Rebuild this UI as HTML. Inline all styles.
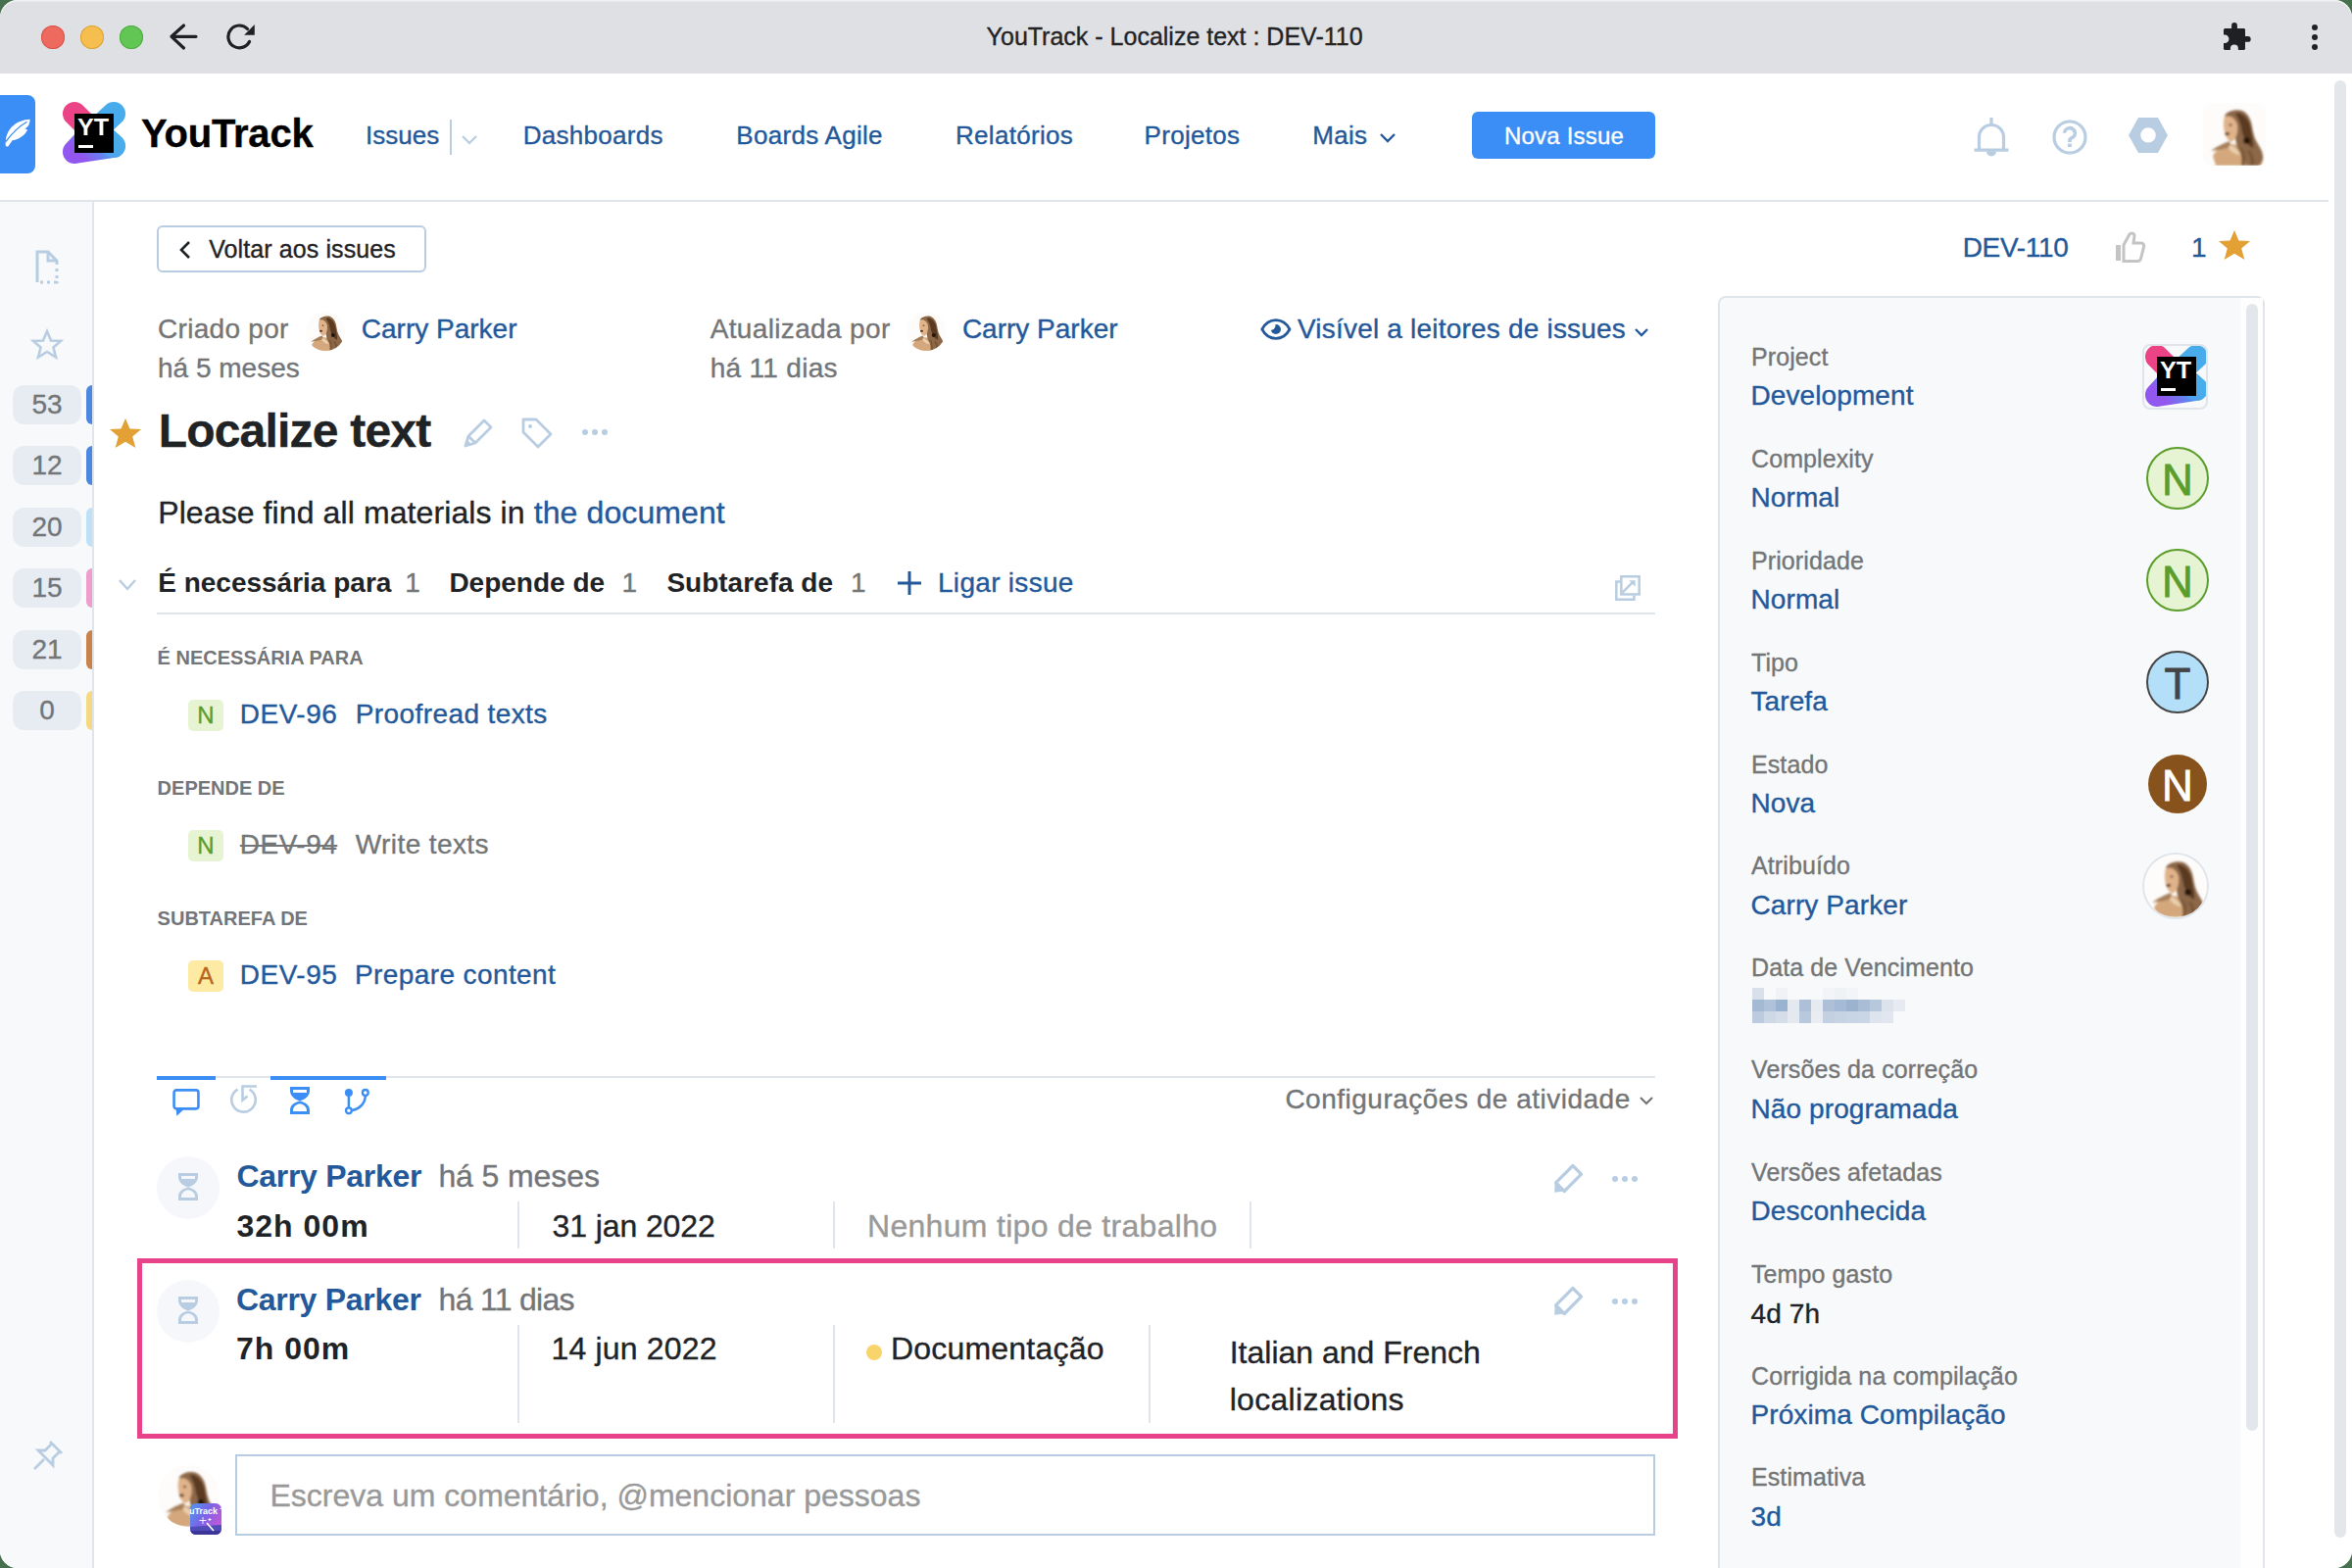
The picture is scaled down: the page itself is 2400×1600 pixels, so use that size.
<!DOCTYPE html>
<html><head><meta charset="utf-8"><title>YouTrack - Localize text : DEV-110</title>
<style>
html,body{margin:0;padding:0;background:#47714e;}
#win{position:relative;width:2400px;height:1600px;overflow:hidden;border-radius:18px;background:#fff;}
#win:after{content:"";position:absolute;left:0;top:0;right:0;bottom:0;border-radius:18px;box-shadow:inset 0 1.5px 0 rgba(255,255,255,0.55);pointer-events:none;}
.a{position:absolute;}
.t{position:absolute;white-space:nowrap;font-family:"Liberation Sans",sans-serif;-webkit-text-stroke:0.35px currentColor;}
svg.a{overflow:visible;}
s{text-decoration-thickness:2px;}
</style></head><body><div id="win">
<div class="a" style="left:0px;top:0px;width:2400px;height:75px;background:#dfe0e4;"></div>
<div class="a" style="left:42px;top:26px;width:24px;height:24px;background:#ee6a5f;border-radius:50%;box-shadow:inset 0 0 0 1px #d65447;"></div>
<div class="a" style="left:82px;top:26px;width:24px;height:24px;background:#f5be4f;border-radius:50%;box-shadow:inset 0 0 0 1px #d9a237;"></div>
<div class="a" style="left:122px;top:26px;width:24px;height:24px;background:#62c655;border-radius:50%;box-shadow:inset 0 0 0 1px #4eab42;"></div>
<svg class="a" style="left:170px;top:20px" width="36" height="36" viewBox="0 0 36 36"><path d="M17.5 6 L5 17.3 L17.5 29 M5 17.3 H30" fill="none" stroke="#1f2023" stroke-width="3.2" stroke-linecap="round" stroke-linejoin="round"/></svg>
<svg class="a" style="left:228px;top:20px" width="36" height="36" viewBox="0 0 36 36"><path d="M26.5 22.5 A11.4 11.4 0 1 1 24.5 9.5" fill="none" stroke="#1f2023" stroke-width="3.2" stroke-linecap="round"/><path d="M31.8 5.1 V15.8 H21.1 Z" fill="#1f2023"/></svg>
<div class="t" style="left:1006.6px;top:22.96px;font-size:25px;line-height:28.75px;color:#222326;">YouTrack - Localize text : DEV-110</div>
<svg class="a" style="left:2266px;top:20px" width="34" height="34" viewBox="0 0 34 34"><path d="M3 10.5 a1.5 1.5 0 0 1 1.5-1.5 H11.1 V6 a2.9 2.9 0 0 1 5.8 0 V9 H23.5 a1.5 1.5 0 0 1 1.5 1.5 V17 H27.8 a2.9 2.9 0 0 1 0 5.8 H25 V29.5 a1.5 1.5 0 0 1 -1.5 1.5 H17.9 V29.4 a4 4 0 0 0 -8 0 V31 H4.5 a1.5 1.5 0 0 1 -1.5-1.5 V24 H4.2 a4.25 4.25 0 0 0 0-8.5 H3 Z" fill="#1f2023"/></svg>
<div class="a" style="left:2359px;top:25px;width:6px;height:6px;background:#1f2023;border-radius:50%;"></div>
<div class="a" style="left:2359px;top:35px;width:6px;height:6px;background:#1f2023;border-radius:50%;"></div>
<div class="a" style="left:2359px;top:45px;width:6px;height:6px;background:#1f2023;border-radius:50%;"></div>
<div class="a" style="left:0px;top:75px;width:2400px;height:1525px;background:#fff;"></div>
<div class="a" style="left:0px;top:204px;width:2376px;height:2px;background:#dfe5eb;"></div>
<div class="a" style="left:0px;top:97px;width:36px;height:80px;background:#3b8ef5;border-radius:0 8px 8px 0;"></div>
<svg class="a" style="left:0px;top:95px" width="40" height="85" viewBox="0 0 40 85"><path d="M30.6 26.8 C17 27.5 7 36 6 48.2 L5.6 52.5 C5.6 54.5 7.6 55.4 8.8 53.8 L12.6 48.2 C20.5 47.5 26.5 41.5 28 37.2 L25.2 36.3 C28.3 35 30.2 33 30.6 26.8 Z" fill="#fff"/><path d="M27.5 29.3 C19.5 34 11.5 42 6 49.5" fill="none" stroke="#3b8ef5" stroke-width="1.3"/></svg>
<svg class="a" style="left:58px;top:98px" width="76" height="76" viewBox="0 0 76 76"><defs>
<linearGradient id="lgA" x1="0" y1="0.8" x2="1" y2="0.4"><stop offset="0" stop-color="#9157ee"/><stop offset="0.5" stop-color="#5f86f0"/><stop offset="1" stop-color="#48adec"/></linearGradient>
</defs>
<path d="M18 57 L58 51 M18 57 L30 44 M58 51 L47 41" stroke="url(#lgA)" stroke-width="24" stroke-linecap="round" fill="none"/>
<path d="M18 18 L32 32" stroke="#ec4387" stroke-width="24" stroke-linecap="round"/>
<path d="M58 18 L44 31" stroke="#48acec" stroke-width="24" stroke-linecap="round"/>
<path d="M58 51 L47 41" stroke="#4aaeec" stroke-width="24" stroke-linecap="round" opacity="0.6"/>
<rect x="18" y="18" width="40" height="40" fill="#000"/>
<text x="21" y="40" font-family="Liberation Sans" font-weight="700" font-size="23.5" fill="#fff" textLength="32" lengthAdjust="spacingAndGlyphs">YT</text>
<rect x="22" y="50" width="15" height="3" fill="#fff"/></svg>
<div class="t" style="left:144px;top:112.74px;font-size:40px;line-height:46.0px;color:#000;font-weight:700;letter-spacing:-0.2px;">YouTrack</div>
<div class="t" style="left:373px;top:123.94px;font-size:26px;line-height:29.9px;color:#23599a;">Issues</div>
<div class="a" style="left:459px;top:122px;width:2px;height:36px;background:#b8cde2;"></div>
<svg class="a" style="left:470px;top:135.5px" width="18" height="14" viewBox="0 0 18 14"><path d="M2 3 L9 10 L16 3" fill="none" stroke="#b8cde2" stroke-width="2.2"/></svg>
<div class="t" style="left:533.7px;top:123.94px;font-size:26px;line-height:29.9px;color:#23599a;letter-spacing:0.3px;">Dashboards</div>
<div class="t" style="left:751.3px;top:123.94px;font-size:26px;line-height:29.9px;color:#23599a;letter-spacing:0.3px;">Boards Agile</div>
<div class="t" style="left:975px;top:123.94px;font-size:26px;line-height:29.9px;color:#23599a;letter-spacing:0.3px;">Relatórios</div>
<div class="t" style="left:1167.6px;top:123.94px;font-size:26px;line-height:29.9px;color:#23599a;letter-spacing:0.3px;">Projetos</div>
<div class="t" style="left:1339.3px;top:123.94px;font-size:26px;line-height:29.9px;color:#23599a;letter-spacing:0.3px;">Mais</div>
<svg class="a" style="left:1406px;top:133px" width="20" height="16" viewBox="0 0 20 16"><path d="M3 4 L10 11 L17 4" fill="none" stroke="#23599a" stroke-width="2.4"/></svg>
<div class="a" style="left:1502px;top:114px;width:187px;height:48px;background:#3b8ef5;border-radius:6px;"></div>
<div class="t" style="left:1535px;top:124.88px;font-size:24px;line-height:27.6px;color:#fff;letter-spacing:0.2px;">Nova Issue</div>
<svg class="a" style="left:2012px;top:118px" width="40" height="44" viewBox="0 0 40 44"><path d="M20 2 V10 M7.5 34 V22 a12.5 12.5 0 0 1 25 0 V34 M2.5 35.2 H37.5" fill="none" stroke="#b8cde2" stroke-width="3.2"/><path d="M15 36.5 a5 5 0 0 0 10 0 Z" fill="#b8cde2"/></svg>
<svg class="a" style="left:2093px;top:121px" width="38" height="38" viewBox="0 0 38 38"><circle cx="19" cy="19" r="16" fill="none" stroke="#b8cde2" stroke-width="3.2"/><path d="M13.6 14.8 a5.4 5.2 0 1 1 7.6 4.8 c-1.3 .6-2.3 1.3-2.3 2.8 V24" fill="none" stroke="#b8cde2" stroke-width="3.6"/><rect x="16.9" y="25.6" width="4" height="3.4" fill="#b8cde2"/></svg>
<svg class="a" style="left:2171px;top:119px" width="42" height="38" viewBox="0 0 42 38"><path d="M11 1 H31 L41 19 L31 37 H11 L1 19 Z M21 11.2 a7.7 7.7 0 1 0 0.01 0 Z" fill="#b8cde2" fill-rule="evenodd"/></svg>
<svg class="a" style="left:2248px;top:105px;border-radius:10px;" width="64" height="64" viewBox="0 0 64 64"><defs><clipPath id="c2248105"><rect width="64" height="64" rx="8"/></clipPath>
<filter id="f2248105" x="-10%" y="-10%" width="120%" height="120%"><feGaussianBlur stdDeviation="0.9"/></filter></defs>
<g clip-path="url(#c2248105)"><rect width="64" height="64" fill="#fdfcfb"/><g filter="url(#f2248105)">
<path d="M10 54 C14 46 22 43 30 42 L44 44 C52 46 58 51 61 57 L60 64 L13 64 Z" fill="#d4a87c"/>
<path d="M22 13 C25 8 34 6 40 8 C46 11 49 17 50 24 C51 30 52 36 56 42 C59 47 62 52 61 58 L57 64 L44 64 C44 56 40 50 35 46 C33 36 31 24 22 13 Z" fill="#8c6848"/>
<path d="M36 10 C44 12 48 20 49 28 C50 35 52 40 51 46 C46 44 42 38 40 30 C39 24 38 18 33 11 Z" fill="#5a3a22"/>
<circle cx="44.5" cy="38.5" r="3.2" fill="#24160c"/>
<path d="M27 39 C21 41 15 44 8 49 C15 48 22 47 29 45 Z" fill="#a67f5a"/>
<path d="M22 14 C27 12 33 15 35 22 C36 30 34 36 30 39.5 C27 39.5 24 37 23 33 C21 28 20 20 22 14 Z" fill="#e0b38a"/>
<ellipse cx="24.8" cy="31.5" rx="2.4" ry="1.5" fill="#4a2c18"/>
<ellipse cx="28" cy="22.5" rx="1.5" ry="1.1" fill="#4e3020"/>
<path d="M27 43 C31 44 36 48 38 53 C33 53 29 50 26 46 Z" fill="#ead0b0"/>
<path d="M40 46 C43 50 44 56 43 64 L39 64 C40 57 39 51 36 47 Z" fill="#7e5a3a"/>
<path d="M48 48 C51 53 53 58 52 64 L49 64 C49 58 48 53 45 49 Z" fill="#7a5535"/>
</g></g></svg>
<div class="a" style="left:2382px;top:82px;width:12px;height:1487px;background:#e3e6ea;border-radius:6px;"></div>
<div class="a" style="left:0px;top:206px;width:94px;height:1394px;background:#f7f9fa;"></div>
<div class="a" style="left:94px;top:206px;width:2px;height:1394px;background:#dfe5eb;"></div>
<svg class="a" style="left:36px;top:255px" width="24" height="34" viewBox="0 0 24 34"><path d="M2 33 V2 H13 L22 11 V15 M13 2 V11 H22 M22 19 V22 M22 26 V29 M22 32 V33 H19 M15 33 H12 M8 33 H5" fill="none" stroke="#b8cde2" stroke-width="3"/></svg>
<svg class="a" style="left:31px;top:335px" width="34" height="32" viewBox="0 0 34 32"><path d="M17 3 L21 12.5 L31 13 L23.5 19.5 L26 29.5 L17 24 L8 29.5 L10.5 19.5 L3 13 L13 12.5 Z" fill="none" stroke="#b8cde2" stroke-width="2.6" stroke-linejoin="miter"/></svg>
<div class="a" style="left:13px;top:393.0px;width:70px;height:40px;background:#e6ecf2;border-radius:12px;"></div>
<div class="t" style="left:13px;top:393.0px;width:70px;height:40px;line-height:40px;text-align:center;font-size:28px;color:#737577;">53</div>
<div class="a" style="left:88px;top:393.0px;width:6px;height:40px;background:#4d88e0;border-radius:6px 0 0 6px;"></div>
<div class="a" style="left:13px;top:455.4px;width:70px;height:40px;background:#e6ecf2;border-radius:12px;"></div>
<div class="t" style="left:13px;top:455.4px;width:70px;height:40px;line-height:40px;text-align:center;font-size:28px;color:#737577;">12</div>
<div class="a" style="left:88px;top:455.4px;width:6px;height:40px;background:#4d88e0;border-radius:6px 0 0 6px;"></div>
<div class="a" style="left:13px;top:517.8px;width:70px;height:40px;background:#e6ecf2;border-radius:12px;"></div>
<div class="t" style="left:13px;top:517.8px;width:70px;height:40px;line-height:40px;text-align:center;font-size:28px;color:#737577;">20</div>
<div class="a" style="left:88px;top:517.8px;width:6px;height:40px;background:#bfe1f8;border-radius:6px 0 0 6px;"></div>
<div class="a" style="left:13px;top:580.2px;width:70px;height:40px;background:#e6ecf2;border-radius:12px;"></div>
<div class="t" style="left:13px;top:580.2px;width:70px;height:40px;line-height:40px;text-align:center;font-size:28px;color:#737577;">15</div>
<div class="a" style="left:88px;top:580.2px;width:6px;height:40px;background:#ee9dcc;border-radius:6px 0 0 6px;"></div>
<div class="a" style="left:13px;top:642.6px;width:70px;height:40px;background:#e6ecf2;border-radius:12px;"></div>
<div class="t" style="left:13px;top:642.6px;width:70px;height:40px;line-height:40px;text-align:center;font-size:28px;color:#737577;">21</div>
<div class="a" style="left:88px;top:642.6px;width:6px;height:40px;background:#c9834a;border-radius:6px 0 0 6px;"></div>
<div class="a" style="left:13px;top:705.0px;width:70px;height:40px;background:#e6ecf2;border-radius:12px;"></div>
<div class="t" style="left:13px;top:705.0px;width:70px;height:40px;line-height:40px;text-align:center;font-size:28px;color:#737577;">0</div>
<div class="a" style="left:88px;top:705.0px;width:6px;height:40px;background:#f5d884;border-radius:6px 0 0 6px;"></div>
<div class="a" style="left:96px;top:206px;width:0px;height:0px;"></div>
<svg class="a" style="left:32px;top:1468px" width="34" height="34" viewBox="0 0 34 34"><path d="M19 3 L31 15 M21 5 L14 12 L7 12 L22 27 L22 20 L29 13 M13 21 L3 31" fill="none" stroke="#b8cde2" stroke-width="2.8"/></svg>
<div class="a" style="left:160px;top:230px;width:271px;height:44px;border:2px solid #b8cde2;border-radius:6px;"></div>
<svg class="a" style="left:180px;top:244px" width="18" height="22" viewBox="0 0 18 22"><path d="M13 3 L5 11 L13 19" fill="none" stroke="#1f2326" stroke-width="2.6"/></svg>
<div class="t" style="left:213.2px;top:239.86px;font-size:25px;line-height:28.75px;color:#1f2326;letter-spacing:0.1px;">Voltar aos issues</div>
<div class="t" style="left:161px;top:320.00px;font-size:28px;line-height:32.2px;color:#737577;letter-spacing:0.3px;">Criado por</div>
<svg class="a" style="left:312px;top:318px;border-radius:50%;" width="40" height="40" viewBox="0 0 64 64"><defs><clipPath id="c312318"><rect width="64" height="64" rx="32"/></clipPath>
<filter id="f312318" x="-10%" y="-10%" width="120%" height="120%"><feGaussianBlur stdDeviation="0.9"/></filter></defs>
<g clip-path="url(#c312318)"><rect width="64" height="64" fill="#fdfcfb"/><g filter="url(#f312318)">
<path d="M10 54 C14 46 22 43 30 42 L44 44 C52 46 58 51 61 57 L60 64 L13 64 Z" fill="#d4a87c"/>
<path d="M22 13 C25 8 34 6 40 8 C46 11 49 17 50 24 C51 30 52 36 56 42 C59 47 62 52 61 58 L57 64 L44 64 C44 56 40 50 35 46 C33 36 31 24 22 13 Z" fill="#8c6848"/>
<path d="M36 10 C44 12 48 20 49 28 C50 35 52 40 51 46 C46 44 42 38 40 30 C39 24 38 18 33 11 Z" fill="#5a3a22"/>
<circle cx="44.5" cy="38.5" r="3.2" fill="#24160c"/>
<path d="M27 39 C21 41 15 44 8 49 C15 48 22 47 29 45 Z" fill="#a67f5a"/>
<path d="M22 14 C27 12 33 15 35 22 C36 30 34 36 30 39.5 C27 39.5 24 37 23 33 C21 28 20 20 22 14 Z" fill="#e0b38a"/>
<ellipse cx="24.8" cy="31.5" rx="2.4" ry="1.5" fill="#4a2c18"/>
<ellipse cx="28" cy="22.5" rx="1.5" ry="1.1" fill="#4e3020"/>
<path d="M27 43 C31 44 36 48 38 53 C33 53 29 50 26 46 Z" fill="#ead0b0"/>
<path d="M40 46 C43 50 44 56 43 64 L39 64 C40 57 39 51 36 47 Z" fill="#7e5a3a"/>
<path d="M48 48 C51 53 53 58 52 64 L49 64 C49 58 48 53 45 49 Z" fill="#7a5535"/>
</g></g></svg>
<div class="t" style="left:368.8px;top:320.00px;font-size:28px;line-height:32.2px;color:#23599a;">Carry Parker</div>
<div class="t" style="left:161px;top:360.00px;font-size:28px;line-height:32.2px;color:#737577;">há 5 meses</div>
<div class="t" style="left:724.7px;top:320.00px;font-size:28px;line-height:32.2px;color:#737577;letter-spacing:0.35px;">Atualizada por</div>
<svg class="a" style="left:925px;top:318px;border-radius:50%;" width="40" height="40" viewBox="0 0 64 64"><defs><clipPath id="c925318"><rect width="64" height="64" rx="32"/></clipPath>
<filter id="f925318" x="-10%" y="-10%" width="120%" height="120%"><feGaussianBlur stdDeviation="0.9"/></filter></defs>
<g clip-path="url(#c925318)"><rect width="64" height="64" fill="#fdfcfb"/><g filter="url(#f925318)">
<path d="M10 54 C14 46 22 43 30 42 L44 44 C52 46 58 51 61 57 L60 64 L13 64 Z" fill="#d4a87c"/>
<path d="M22 13 C25 8 34 6 40 8 C46 11 49 17 50 24 C51 30 52 36 56 42 C59 47 62 52 61 58 L57 64 L44 64 C44 56 40 50 35 46 C33 36 31 24 22 13 Z" fill="#8c6848"/>
<path d="M36 10 C44 12 48 20 49 28 C50 35 52 40 51 46 C46 44 42 38 40 30 C39 24 38 18 33 11 Z" fill="#5a3a22"/>
<circle cx="44.5" cy="38.5" r="3.2" fill="#24160c"/>
<path d="M27 39 C21 41 15 44 8 49 C15 48 22 47 29 45 Z" fill="#a67f5a"/>
<path d="M22 14 C27 12 33 15 35 22 C36 30 34 36 30 39.5 C27 39.5 24 37 23 33 C21 28 20 20 22 14 Z" fill="#e0b38a"/>
<ellipse cx="24.8" cy="31.5" rx="2.4" ry="1.5" fill="#4a2c18"/>
<ellipse cx="28" cy="22.5" rx="1.5" ry="1.1" fill="#4e3020"/>
<path d="M27 43 C31 44 36 48 38 53 C33 53 29 50 26 46 Z" fill="#ead0b0"/>
<path d="M40 46 C43 50 44 56 43 64 L39 64 C40 57 39 51 36 47 Z" fill="#7e5a3a"/>
<path d="M48 48 C51 53 53 58 52 64 L49 64 C49 58 48 53 45 49 Z" fill="#7a5535"/>
</g></g></svg>
<div class="t" style="left:981.9px;top:320.00px;font-size:28px;line-height:32.2px;color:#23599a;">Carry Parker</div>
<div class="t" style="left:724.7px;top:359.70px;font-size:28px;line-height:32.2px;color:#737577;letter-spacing:0.3px;">há 11 dias</div>
<svg class="a" style="left:1285px;top:323px" width="34" height="26" viewBox="0 0 34 26"><defs><mask id="eyem"><rect width="34" height="26" fill="#fff"/><circle cx="11.5" cy="9" r="5" fill="#000"/></mask></defs><path d="M2.8 13 C6.5 6 11 3.7 16.9 3.7 C22.8 3.7 27.3 6 31 13 C27.3 20 22.8 22.3 16.9 22.3 C11 22.3 6.5 20 2.8 13 Z" fill="none" stroke="#23599a" stroke-width="2.7"/><circle cx="16.9" cy="13" r="5.1" fill="#23599a" mask="url(#eyem)"/></svg>
<div class="t" style="left:1324px;top:319.70px;font-size:28px;line-height:32.2px;color:#23599a;letter-spacing:0.2px;">Visível a leitores de issues</div>
<svg class="a" style="left:1666px;top:332px" width="18" height="14" viewBox="0 0 18 14"><path d="M3 4 L9 10 L15 4" fill="none" stroke="#23599a" stroke-width="2.4"/></svg>
<svg class="a" style="left:110px;top:426px" width="36" height="32" viewBox="0 0 36 32"><path d="M18 1 L22.5 11.5 L34 12 L25.2 19.5 L28.3 31 L18 24.7 L7.7 31 L10.8 19.5 L2 12 L13.5 11.5 Z" fill="#e2a035"/></svg>
<div class="t" style="left:161.7px;top:411.77px;font-size:48px;line-height:55.2px;color:#1f2326;font-weight:700;letter-spacing:-0.8px;">Localize text</div>
<svg class="a" style="left:472px;top:426px" width="32" height="32" viewBox="0 0 32 32"><path d="M3 29 L6 19 L22 3 L29 10 L13 26 Z M6 19 L13 26" fill="none" stroke="#b8cde2" stroke-width="2.8" stroke-linejoin="round"/><path d="M3 29 L4.5 22.5 L9.5 27.5 Z" fill="#b8cde2"/></svg>
<svg class="a" style="left:531px;top:425px" width="34" height="34" viewBox="0 0 34 34"><path d="M3 3 H16 L31 18 L18 31 L3 16 Z" fill="none" stroke="#b8cde2" stroke-width="2.8" stroke-linejoin="round"/><circle cx="10" cy="10" r="2" fill="#b8cde2"/></svg>
<div class="a" style="left:594px;top:438px;width:6px;height:6px;background:#b8cde2;border-radius:50%;"></div>
<div class="a" style="left:604px;top:438px;width:6px;height:6px;background:#b8cde2;border-radius:50%;"></div>
<div class="a" style="left:614px;top:438px;width:6px;height:6px;background:#b8cde2;border-radius:50%;"></div>
<div class="t" style="left:161.2px;top:505.11px;font-size:32px;line-height:36.8px;color:#1f2326;letter-spacing:0.1px;">Please find all materials in <span style="color:#23599a">the document</span></div>
<svg class="a" style="left:120px;top:588px" width="20" height="18" viewBox="0 0 20 18"><path d="M2 4 L10 13 L18 4" fill="none" stroke="#b8cde2" stroke-width="2.4"/></svg>
<div class="t" style="left:161.2px;top:578.50px;font-size:28px;line-height:32.2px;color:#1f2326;font-weight:700;-webkit-text-stroke:0;">É necessária para</div>
<div class="t" style="left:413.3px;top:578.50px;font-size:28px;line-height:32.2px;color:#737577;">1</div>
<div class="t" style="left:458.4px;top:578.50px;font-size:28px;line-height:32.2px;color:#1f2326;font-weight:700;-webkit-text-stroke:0;">Depende de</div>
<div class="t" style="left:634.4px;top:578.50px;font-size:28px;line-height:32.2px;color:#737577;">1</div>
<div class="t" style="left:680.4px;top:578.50px;font-size:28px;line-height:32.2px;color:#1f2326;font-weight:700;-webkit-text-stroke:0;">Subtarefa de</div>
<div class="t" style="left:868px;top:578.50px;font-size:28px;line-height:32.2px;color:#737577;">1</div>
<svg class="a" style="left:914px;top:581px" width="28" height="28" viewBox="0 0 28 28"><path d="M14 2 V26 M2 14 H26" fill="none" stroke="#23599a" stroke-width="3"/></svg>
<div class="t" style="left:957px;top:578.50px;font-size:28px;line-height:32.2px;color:#23599a;letter-spacing:0.3px;">Ligar issue</div>
<svg class="a" style="left:1646px;top:585px" width="28" height="28" viewBox="0 0 28 28"><rect x="8.35" y="3.25" width="18.3" height="18.2" fill="none" stroke="#b8cde2" stroke-width="2.5"/><path d="M7.1 8.45 H3.35 V26.65 H21.45 V22.7" fill="none" stroke="#b8cde2" stroke-width="2.5"/><path d="M9.6 19.6 L20.5 8.7" stroke="#b8cde2" stroke-width="2.5"/><path d="M16.3 7.2 H22.7 V13.8 Z" fill="#b8cde2"/></svg>
<div class="a" style="left:160px;top:625px;width:1529px;height:2px;background:#dfe5eb;"></div>
<div class="t" style="left:160.6px;top:659.87px;font-size:20px;line-height:23.0px;color:#737577;font-weight:700;-webkit-text-stroke:0;">É NECESSÁRIA PARA</div>
<div class="t" style="left:192px;top:714px;width:36px;height:32px;line-height:32px;text-align:center;background:#e7f4d3;color:#5b9d2b;font-size:24px;border-radius:5px;">N</div>
<div class="t" style="left:244.8px;top:713.10px;font-size:28px;line-height:32.2px;color:#23599a;letter-spacing:0.5px;">DEV-96</div>
<div class="t" style="left:362.8px;top:713.10px;font-size:28px;line-height:32.2px;color:#23599a;letter-spacing:0.4px;">Proofread texts</div>
<div class="t" style="left:160.6px;top:792.57px;font-size:20px;line-height:23.0px;color:#737577;font-weight:700;-webkit-text-stroke:0;">DEPENDE DE</div>
<div class="t" style="left:192px;top:847px;width:36px;height:32px;line-height:32px;text-align:center;background:#e7f4d3;color:#5b9d2b;font-size:24px;border-radius:5px;">N</div>
<div class="t" style="left:244.8px;top:846.10px;font-size:28px;line-height:32.2px;color:#737577;letter-spacing:0.5px;"><s>DEV-94</s></div>
<div class="t" style="left:362.8px;top:846.10px;font-size:28px;line-height:32.2px;color:#737577;letter-spacing:0.4px;">Write texts</div>
<div class="t" style="left:160.6px;top:925.77px;font-size:20px;line-height:23.0px;color:#737577;font-weight:700;-webkit-text-stroke:0;">SUBTAREFA DE</div>
<div class="t" style="left:192px;top:980px;width:36px;height:32px;line-height:32px;text-align:center;background:#fdeaa3;color:#b7651c;font-size:24px;border-radius:5px;">A</div>
<div class="t" style="left:244.8px;top:979.10px;font-size:28px;line-height:32.2px;color:#23599a;letter-spacing:0.5px;">DEV-95</div>
<div class="t" style="left:362px;top:979.10px;font-size:28px;line-height:32.2px;color:#23599a;letter-spacing:0.4px;">Prepare content</div>
<div class="a" style="left:160px;top:1098px;width:1529px;height:2px;background:#dfe5eb;"></div>
<div class="a" style="left:160px;top:1098px;width:60px;height:4px;background:#3b8ef5;"></div>
<div class="a" style="left:276px;top:1098px;width:118px;height:4px;background:#3b8ef5;"></div>
<svg class="a" style="left:174px;top:1109px" width="32" height="32" viewBox="0 0 32 32"><rect x="3.55" y="3.35" width="24.9" height="19" rx="2.5" fill="none" stroke="#3b8ef5" stroke-width="2.6"/><path d="M5.5 22 L6.4 29.7 L14.5 22 Z" fill="#3b8ef5"/></svg>
<svg class="a" style="left:232px;top:1105px" width="32" height="34" viewBox="0 0 32 34"><path d="M10.5 6.6 A12.3 12.3 0 1 0 22.5 6.6" fill="none" stroke="#b8cde2" stroke-width="2.6"/><path d="M15.5 3.5 H30 M15.5 2.2 V17.5 L20.5 13.5" fill="none" stroke="#b8cde2" stroke-width="2.6"/></svg>
<svg class="a" style="left:296px;top:1109px" width="20" height="28" viewBox="0 0 20 28"><path d="M0 0 H20 V4 C20 9.5 15 13 10 14.5 C5 13 0 9.5 0 4 Z M3 3.1 V6.1 H17 V3.1 Z" fill="#3b8ef5" fill-rule="evenodd"/><path d="M0 28 V24 C0 18.5 5 15.5 10 14.5 C15 15.5 20 18.5 20 24 V28 Z M3 25 H17 V24 C17 20.5 14 17.8 10 17.3 C6 17.8 3 20.5 3 24 Z" fill="#3b8ef5" fill-rule="evenodd"/></svg>
<svg class="a" style="left:350px;top:1107px" width="30" height="32" viewBox="0 0 30 32"><path d="M5.9 8 V25 M22.8 10.5 C22.8 19 17 24.5 9.5 26" fill="none" stroke="#3b8ef5" stroke-width="2.5"/><circle cx="5.9" cy="7.9" r="4" fill="#3b8ef5"/><circle cx="22.8" cy="7.9" r="2.9" fill="#fff" stroke="#3b8ef5" stroke-width="2.3"/><circle cx="5.9" cy="26.3" r="2.9" fill="#fff" stroke="#3b8ef5" stroke-width="2.3"/></svg>
<div class="t" style="left:1311.4px;top:1105.70px;font-size:28px;line-height:32.2px;color:#737577;letter-spacing:0.5px;">Configurações de atividade</div>
<svg class="a" style="left:1671px;top:1117px" width="18" height="14" viewBox="0 0 18 14"><path d="M3 3 L9 9 L15 3" fill="none" stroke="#737577" stroke-width="2.2"/></svg>
<div class="a" style="left:160px;top:1180px;width:64px;height:64px;background:#f5f7fa;border-radius:50%;"></div>
<svg class="a" style="left:182px;top:1197px" width="20" height="28" viewBox="0 0 20 28"><path d="M0 0 H20 V4 C20 9.5 15 13 10 14.5 C5 13 0 9.5 0 4 Z M3 3.1 V6.1 H17 V3.1 Z" fill="#b8cde2" fill-rule="evenodd"/><path d="M0 28 V24 C0 18.5 5 15.5 10 14.5 C15 15.5 20 18.5 20 24 V28 Z M3 25 H17 V24 C17 20.5 14 17.8 10 17.3 C6 17.8 3 20.5 3 24 Z" fill="#b8cde2" fill-rule="evenodd"/></svg>
<div class="t" style="left:241.5px;top:1181.51px;font-size:32px;line-height:36.8px;color:#23599a;font-weight:700;-webkit-text-stroke:0;letter-spacing:-0.3px;">Carry Parker</div>
<div class="t" style="left:447.4px;top:1181.51px;font-size:32px;line-height:36.8px;color:#737577;letter-spacing:-0.1px;">há 5 meses</div>
<svg class="a" style="left:1584px;top:1188px" width="32" height="32" viewBox="0 0 32 32"><path d="M3.6 18.8 L20.9 1.5 L29.6 10.2 L12.3 27.5 Z M5.8 21 L10.1 25.3" fill="none" stroke="#b8cde2" stroke-width="3.2" stroke-linejoin="round"/><path d="M2.6 18 L2.2 28.8 L13 27.6 Z" fill="#b8cde2"/></svg>
<div class="a" style="left:1645px;top:1200px;width:6px;height:6px;background:#b8cde2;border-radius:50%;"></div>
<div class="a" style="left:1655px;top:1200px;width:6px;height:6px;background:#b8cde2;border-radius:50%;"></div>
<div class="a" style="left:1665px;top:1200px;width:6px;height:6px;background:#b8cde2;border-radius:50%;"></div>
<div class="t" style="left:241.5px;top:1232.51px;font-size:32px;line-height:36.8px;color:#1f2326;font-weight:700;-webkit-text-stroke:0;letter-spacing:1.0px;">32h 00m</div>
<div class="a" style="left:528px;top:1226px;width:2px;height:48px;background:#dfe5eb;"></div>
<div class="t" style="left:563.5px;top:1232.51px;font-size:32px;line-height:36.8px;color:#1f2326;letter-spacing:-0.1px;">31 jan 2022</div>
<div class="a" style="left:850px;top:1226px;width:2px;height:48px;background:#dfe5eb;"></div>
<div class="t" style="left:885px;top:1232.51px;font-size:32px;line-height:36.8px;color:#999999;letter-spacing:0.3px;">Nenhum tipo de trabalho</div>
<div class="a" style="left:1275px;top:1226px;width:2px;height:48px;background:#dfe5eb;"></div>
<div class="a" style="left:140px;top:1284px;width:1562px;height:174px;border:5px solid #e8438a;"></div>
<div class="a" style="left:160px;top:1306px;width:64px;height:64px;background:#f5f7fa;border-radius:50%;"></div>
<svg class="a" style="left:182px;top:1323px" width="20" height="28" viewBox="0 0 20 28"><path d="M0 0 H20 V4 C20 9.5 15 13 10 14.5 C5 13 0 9.5 0 4 Z M3 3.1 V6.1 H17 V3.1 Z" fill="#b8cde2" fill-rule="evenodd"/><path d="M0 28 V24 C0 18.5 5 15.5 10 14.5 C15 15.5 20 18.5 20 24 V28 Z M3 25 H17 V24 C17 20.5 14 17.8 10 17.3 C6 17.8 3 20.5 3 24 Z" fill="#b8cde2" fill-rule="evenodd"/></svg>
<div class="t" style="left:241px;top:1308.11px;font-size:32px;line-height:36.8px;color:#23599a;font-weight:700;-webkit-text-stroke:0;letter-spacing:-0.3px;">Carry Parker</div>
<div class="t" style="left:447.6px;top:1308.11px;font-size:32px;line-height:36.8px;color:#737577;letter-spacing:-0.7px;">há 11 dias</div>
<svg class="a" style="left:1584px;top:1313px" width="32" height="32" viewBox="0 0 32 32"><path d="M3.6 18.8 L20.9 1.5 L29.6 10.2 L12.3 27.5 Z M5.8 21 L10.1 25.3" fill="none" stroke="#b8cde2" stroke-width="3.2" stroke-linejoin="round"/><path d="M2.6 18 L2.2 28.8 L13 27.6 Z" fill="#b8cde2"/></svg>
<div class="a" style="left:1645px;top:1325px;width:6px;height:6px;background:#b8cde2;border-radius:50%;"></div>
<div class="a" style="left:1655px;top:1325px;width:6px;height:6px;background:#b8cde2;border-radius:50%;"></div>
<div class="a" style="left:1665px;top:1325px;width:6px;height:6px;background:#b8cde2;border-radius:50%;"></div>
<div class="t" style="left:241px;top:1358.41px;font-size:32px;line-height:36.8px;color:#1f2326;font-weight:700;-webkit-text-stroke:0;letter-spacing:1.0px;">7h 00m</div>
<div class="a" style="left:528px;top:1352px;width:2px;height:100px;background:#dfe5eb;"></div>
<div class="t" style="left:562.4px;top:1358.41px;font-size:32px;line-height:36.8px;color:#1f2326;letter-spacing:0.2px;">14 jun 2022</div>
<div class="a" style="left:850px;top:1352px;width:2px;height:100px;background:#dfe5eb;"></div>
<div class="a" style="left:884px;top:1372px;width:16px;height:16px;background:#f7d56a;border-radius:50%;"></div>
<div class="t" style="left:909px;top:1358.41px;font-size:32px;line-height:36.8px;color:#1f2326;letter-spacing:0.2px;">Documentação</div>
<div class="a" style="left:1172px;top:1352px;width:2px;height:100px;background:#dfe5eb;"></div>
<div class="t" style="left:1254.7px;top:1361.51px;font-size:32px;line-height:36.8px;color:#1f2326;letter-spacing:0.0px;">Italian and French</div>
<div class="t" style="left:1254.7px;top:1410.11px;font-size:32px;line-height:36.8px;color:#1f2326;letter-spacing:0.3px;">localizations</div>
<svg class="a" style="left:161px;top:1495px;border-radius:50%;" width="63" height="63" viewBox="0 0 64 64"><defs><clipPath id="c1611495"><rect width="64" height="64" rx="32"/></clipPath>
<filter id="f1611495" x="-10%" y="-10%" width="120%" height="120%"><feGaussianBlur stdDeviation="0.9"/></filter></defs>
<g clip-path="url(#c1611495)"><rect width="64" height="64" fill="#fdfcfb"/><g filter="url(#f1611495)">
<path d="M10 54 C14 46 22 43 30 42 L44 44 C52 46 58 51 61 57 L60 64 L13 64 Z" fill="#d4a87c"/>
<path d="M22 13 C25 8 34 6 40 8 C46 11 49 17 50 24 C51 30 52 36 56 42 C59 47 62 52 61 58 L57 64 L44 64 C44 56 40 50 35 46 C33 36 31 24 22 13 Z" fill="#8c6848"/>
<path d="M36 10 C44 12 48 20 49 28 C50 35 52 40 51 46 C46 44 42 38 40 30 C39 24 38 18 33 11 Z" fill="#5a3a22"/>
<circle cx="44.5" cy="38.5" r="3.2" fill="#24160c"/>
<path d="M27 39 C21 41 15 44 8 49 C15 48 22 47 29 45 Z" fill="#a67f5a"/>
<path d="M22 14 C27 12 33 15 35 22 C36 30 34 36 30 39.5 C27 39.5 24 37 23 33 C21 28 20 20 22 14 Z" fill="#e0b38a"/>
<ellipse cx="24.8" cy="31.5" rx="2.4" ry="1.5" fill="#4a2c18"/>
<ellipse cx="28" cy="22.5" rx="1.5" ry="1.1" fill="#4e3020"/>
<path d="M27 43 C31 44 36 48 38 53 C33 53 29 50 26 46 Z" fill="#ead0b0"/>
<path d="M40 46 C43 50 44 56 43 64 L39 64 C40 57 39 51 36 47 Z" fill="#7e5a3a"/>
<path d="M48 48 C51 53 53 58 52 64 L49 64 C49 58 48 53 45 49 Z" fill="#7a5535"/>
</g></g></svg>
<svg class="a" style="left:194px;top:1534px" width="32" height="32" viewBox="0 0 32 32"><defs><linearGradient id="bdg" x1="0" y1="0" x2="1" y2="0.6"><stop offset="0" stop-color="#4a9cf0"/><stop offset="0.5" stop-color="#7a64e6"/><stop offset="1" stop-color="#c257d8"/></linearGradient><clipPath id="bdc"><rect width="32" height="32" rx="6"/></clipPath></defs><g clip-path="url(#bdc)"><rect width="32" height="32" fill="url(#bdg)"/><path d="M0 24 L32 22 V32 H0 Z" fill="#4f4bb8"/><path d="M0 28 H32 V32 H0 Z" fill="#3a3596"/><text x="-1" y="11" font-family="Liberation Sans" font-weight="700" font-size="9" fill="#fff">uTrack T</text><path d="M17 20 L24 28" stroke="#fff" stroke-width="1.6"/><path d="M13 14 V21 M9.5 17.5 H16.5 M20 15 V18 M18.5 16.5 H21.5" stroke="#fff" stroke-width="0.9"/></g></svg>
<div class="a" style="left:240px;top:1484px;width:1445px;height:79px;border:2px solid #b8cde2;"></div>
<div class="t" style="left:275.5px;top:1508.31px;font-size:32px;line-height:36.8px;color:#999999;">Escreva um comentário, @mencionar pessoas</div>
<div class="t" style="left:2002.7px;top:237.10px;font-size:28px;line-height:32.2px;color:#23599a;letter-spacing:-0.3px;">DEV-110</div>
<svg class="a" style="left:2156px;top:235px" width="34" height="34" viewBox="0 0 34 34"><path d="M3 15 H8 V31 H3 Z" fill="#c4c4c4"/><path d="M11 15 L17 4 C19 2 22 3 22 6 L21 13 H29 C31 13 32 15 31.5 17 L28.5 29 C28 31 26.5 31.5 25 31.5 H11 Z" fill="none" stroke="#c4c4c4" stroke-width="3"/></svg>
<div class="t" style="left:2236px;top:237.10px;font-size:28px;line-height:32.2px;color:#23599a;">1</div>
<svg class="a" style="left:2262px;top:234px" width="36" height="32" viewBox="0 0 36 32"><path d="M18 1 L22.5 11.5 L34 12 L25.2 19.5 L28.3 31 L18 24.7 L7.7 31 L10.8 19.5 L2 12 L13.5 11.5 Z" fill="#e2a035"/></svg>
<div class="a" style="left:1753px;top:302px;width:554px;height:1320px;border:2px solid #dfe5eb;border-radius:8px;background:#f7f9fa;"></div>
<div class="a" style="left:2286px;top:304px;width:23px;height:1296px;background:#fefefe;"></div>
<div class="a" style="left:2292px;top:310px;width:12px;height:1150px;background:#e3e6ea;border-radius:6px;"></div>
<div class="t" style="left:1787px;top:350.26px;font-size:25px;line-height:28.75px;color:#737577;letter-spacing:0.1px;">Project</div>
<div class="t" style="left:1786.5px;top:388.00px;font-size:28px;line-height:32.2px;color:#23599a;letter-spacing:0.1px;">Development</div>
<div class="t" style="left:1787px;top:454.36px;font-size:25px;line-height:28.75px;color:#737577;letter-spacing:0.1px;">Complexity</div>
<div class="t" style="left:1786.5px;top:492.10px;font-size:28px;line-height:32.2px;color:#23599a;letter-spacing:0.1px;">Normal</div>
<div class="t" style="left:1787px;top:557.86px;font-size:25px;line-height:28.75px;color:#737577;letter-spacing:0.1px;">Prioridade</div>
<div class="t" style="left:1786.5px;top:596.20px;font-size:28px;line-height:32.2px;color:#23599a;letter-spacing:0.1px;">Normal</div>
<div class="t" style="left:1787px;top:661.66px;font-size:25px;line-height:28.75px;color:#737577;letter-spacing:0.1px;">Tipo</div>
<div class="t" style="left:1786.5px;top:699.90px;font-size:28px;line-height:32.2px;color:#23599a;letter-spacing:0.1px;">Tarefa</div>
<div class="t" style="left:1787px;top:765.76px;font-size:25px;line-height:28.75px;color:#737577;letter-spacing:0.1px;">Estado</div>
<div class="t" style="left:1786.5px;top:804.00px;font-size:28px;line-height:32.2px;color:#23599a;letter-spacing:0.1px;">Nova</div>
<div class="t" style="left:1787px;top:869.26px;font-size:25px;line-height:28.75px;color:#737577;letter-spacing:0.1px;">Atribuído</div>
<div class="t" style="left:1786.5px;top:908.10px;font-size:28px;line-height:32.2px;color:#23599a;letter-spacing:0.1px;">Carry Parker</div>
<div class="t" style="left:1787px;top:973.26px;font-size:25px;line-height:28.75px;color:#737577;letter-spacing:0.1px;">Data de Vencimento</div>
<div class="t" style="left:1787px;top:1077.26px;font-size:25px;line-height:28.75px;color:#737577;letter-spacing:0.1px;">Versões da correção</div>
<div class="t" style="left:1786.5px;top:1115.70px;font-size:28px;line-height:32.2px;color:#23599a;letter-spacing:0.1px;">Não programada</div>
<div class="t" style="left:1787px;top:1181.56px;font-size:25px;line-height:28.75px;color:#737577;letter-spacing:0.1px;">Versões afetadas</div>
<div class="t" style="left:1786.5px;top:1220.20px;font-size:28px;line-height:32.2px;color:#23599a;letter-spacing:0.1px;">Desconhecida</div>
<div class="t" style="left:1787px;top:1285.86px;font-size:25px;line-height:28.75px;color:#737577;letter-spacing:0.1px;">Tempo gasto</div>
<div class="t" style="left:1786.5px;top:1324.60px;font-size:28px;line-height:32.2px;color:#1f2326;letter-spacing:0.1px;">4d 7h</div>
<div class="t" style="left:1787px;top:1389.56px;font-size:25px;line-height:28.75px;color:#737577;letter-spacing:0.1px;">Corrigida na compilação</div>
<div class="t" style="left:1786.5px;top:1427.60px;font-size:28px;line-height:32.2px;color:#23599a;letter-spacing:0.1px;">Próxima Compilação</div>
<div class="t" style="left:1787px;top:1493.16px;font-size:25px;line-height:28.75px;color:#737577;letter-spacing:0.1px;">Estimativa</div>
<div class="t" style="left:1786.5px;top:1531.90px;font-size:28px;line-height:32.2px;color:#23599a;letter-spacing:0.1px;">3d</div>
<div class="a" style="left:1788px;top:1008px;width:12px;height:12px;background:#d8e0ea;"></div>
<div class="a" style="left:1812px;top:1008px;width:12px;height:12px;background:#f0f2f5;"></div>
<div class="a" style="left:1860px;top:1008px;width:12px;height:12px;background:#f2f4f7;"></div>
<div class="a" style="left:1872px;top:1008px;width:12px;height:12px;background:#eef2f5;"></div>
<div class="a" style="left:1884px;top:1008px;width:12px;height:12px;background:#f2f4f7;"></div>
<div class="a" style="left:1788px;top:1020px;width:12px;height:12px;background:#a4b9d3;"></div>
<div class="a" style="left:1800px;top:1020px;width:12px;height:12px;background:#afc2d9;"></div>
<div class="a" style="left:1812px;top:1020px;width:12px;height:12px;background:#9ab3d0;"></div>
<div class="a" style="left:1824px;top:1020px;width:12px;height:12px;background:#e4e9f0;"></div>
<div class="a" style="left:1836px;top:1020px;width:12px;height:12px;background:#adc0d8;"></div>
<div class="a" style="left:1848px;top:1020px;width:12px;height:12px;background:#e6eaf1;"></div>
<div class="a" style="left:1860px;top:1020px;width:12px;height:12px;background:#adc0d8;"></div>
<div class="a" style="left:1872px;top:1020px;width:12px;height:12px;background:#a5bad4;"></div>
<div class="a" style="left:1884px;top:1020px;width:12px;height:12px;background:#9cb3cf;"></div>
<div class="a" style="left:1896px;top:1020px;width:12px;height:12px;background:#a9bdd6;"></div>
<div class="a" style="left:1908px;top:1020px;width:12px;height:12px;background:#b8c8dc;"></div>
<div class="a" style="left:1920px;top:1020px;width:12px;height:12px;background:#dce3ed;"></div>
<div class="a" style="left:1932px;top:1020px;width:12px;height:12px;background:#e7ebf1;"></div>
<div class="a" style="left:1788px;top:1032px;width:12px;height:12px;background:#bccbde;"></div>
<div class="a" style="left:1800px;top:1032px;width:12px;height:12px;background:#cdd9e6;"></div>
<div class="a" style="left:1812px;top:1032px;width:12px;height:12px;background:#d4dde8;"></div>
<div class="a" style="left:1824px;top:1032px;width:12px;height:12px;background:#e4e9f0;"></div>
<div class="a" style="left:1836px;top:1032px;width:12px;height:12px;background:#b8c9dd;"></div>
<div class="a" style="left:1848px;top:1032px;width:12px;height:12px;background:#e9edf2;"></div>
<div class="a" style="left:1860px;top:1032px;width:12px;height:12px;background:#c2d0e1;"></div>
<div class="a" style="left:1872px;top:1032px;width:12px;height:12px;background:#c5d3e3;"></div>
<div class="a" style="left:1884px;top:1032px;width:12px;height:12px;background:#c8d5e4;"></div>
<div class="a" style="left:1896px;top:1032px;width:12px;height:12px;background:#c9d6e5;"></div>
<div class="a" style="left:1908px;top:1032px;width:12px;height:12px;background:#dde4ed;"></div>
<div class="a" style="left:1920px;top:1032px;width:12px;height:12px;background:#e2e7ef;"></div>
<div class="a" style="left:2186px;top:351px;width:63px;height:63px;border:2px solid #dfe5eb;border-radius:8px;overflow:hidden;background:#f7f9fa;"><svg style="position:absolute;left:-5.5px;top:-7px" width="76" height="76" viewBox="0 0 76 76"><defs>
<linearGradient id="lgB" x1="0" y1="0.8" x2="1" y2="0.4"><stop offset="0" stop-color="#9157ee"/><stop offset="0.5" stop-color="#5f86f0"/><stop offset="1" stop-color="#48adec"/></linearGradient>
</defs>
<path d="M18 57 L58 51 M18 57 L30 44 M58 51 L47 41" stroke="url(#lgB)" stroke-width="24" stroke-linecap="round" fill="none"/>
<path d="M18 18 L32 32" stroke="#ec4387" stroke-width="24" stroke-linecap="round"/>
<path d="M58 18 L44 31" stroke="#48acec" stroke-width="24" stroke-linecap="round"/>
<path d="M58 51 L47 41" stroke="#4aaeec" stroke-width="24" stroke-linecap="round" opacity="0.6"/>
<rect x="18" y="18" width="40" height="40" fill="#000"/>
<text x="21" y="40" font-family="Liberation Sans" font-weight="700" font-size="23.5" fill="#fff" textLength="32" lengthAdjust="spacingAndGlyphs">YT</text>
<rect x="22" y="50" width="15" height="3" fill="#fff"/></svg></div>
<div class="t" style="left:2190px;top:456px;width:60px;height:60px;line-height:64px;text-align:center;border-radius:50%;background:#e7f4d3;border:2px solid #5b9d2b;color:#5b9d2b;font-size:44px;-webkit-text-stroke:0.8px #5b9d2b;">N</div>
<div class="t" style="left:2190px;top:560px;width:60px;height:60px;line-height:64px;text-align:center;border-radius:50%;background:#e7f4d3;border:2px solid #5b9d2b;color:#5b9d2b;font-size:44px;-webkit-text-stroke:0.8px #5b9d2b;">N</div>
<div class="t" style="left:2190px;top:664px;width:60px;height:60px;line-height:64px;text-align:center;border-radius:50%;background:#b3dff8;border:2px solid #454545;color:#444444;font-size:44px;-webkit-text-stroke:0.8px #444444;">T</div>
<div class="t" style="left:2192px;top:770px;width:60px;height:60px;line-height:64px;text-align:center;border-radius:50%;background:#87521c;color:#ffffff;font-size:44px;-webkit-text-stroke:0.8px #ffffff;">N</div>
<svg class="a" style="left:2188px;top:872px;border-radius:50%;box-shadow:0 0 0 2px #dfe5eb;" width="64" height="64" viewBox="0 0 64 64"><defs><clipPath id="c2188872"><rect width="64" height="64" rx="32"/></clipPath>
<filter id="f2188872" x="-10%" y="-10%" width="120%" height="120%"><feGaussianBlur stdDeviation="0.9"/></filter></defs>
<g clip-path="url(#c2188872)"><rect width="64" height="64" fill="#fdfcfb"/><g filter="url(#f2188872)">
<path d="M10 54 C14 46 22 43 30 42 L44 44 C52 46 58 51 61 57 L60 64 L13 64 Z" fill="#d4a87c"/>
<path d="M22 13 C25 8 34 6 40 8 C46 11 49 17 50 24 C51 30 52 36 56 42 C59 47 62 52 61 58 L57 64 L44 64 C44 56 40 50 35 46 C33 36 31 24 22 13 Z" fill="#8c6848"/>
<path d="M36 10 C44 12 48 20 49 28 C50 35 52 40 51 46 C46 44 42 38 40 30 C39 24 38 18 33 11 Z" fill="#5a3a22"/>
<circle cx="44.5" cy="38.5" r="3.2" fill="#24160c"/>
<path d="M27 39 C21 41 15 44 8 49 C15 48 22 47 29 45 Z" fill="#a67f5a"/>
<path d="M22 14 C27 12 33 15 35 22 C36 30 34 36 30 39.5 C27 39.5 24 37 23 33 C21 28 20 20 22 14 Z" fill="#e0b38a"/>
<ellipse cx="24.8" cy="31.5" rx="2.4" ry="1.5" fill="#4a2c18"/>
<ellipse cx="28" cy="22.5" rx="1.5" ry="1.1" fill="#4e3020"/>
<path d="M27 43 C31 44 36 48 38 53 C33 53 29 50 26 46 Z" fill="#ead0b0"/>
<path d="M40 46 C43 50 44 56 43 64 L39 64 C40 57 39 51 36 47 Z" fill="#7e5a3a"/>
<path d="M48 48 C51 53 53 58 52 64 L49 64 C49 58 48 53 45 49 Z" fill="#7a5535"/>
</g></g></svg>
</div></body></html>
